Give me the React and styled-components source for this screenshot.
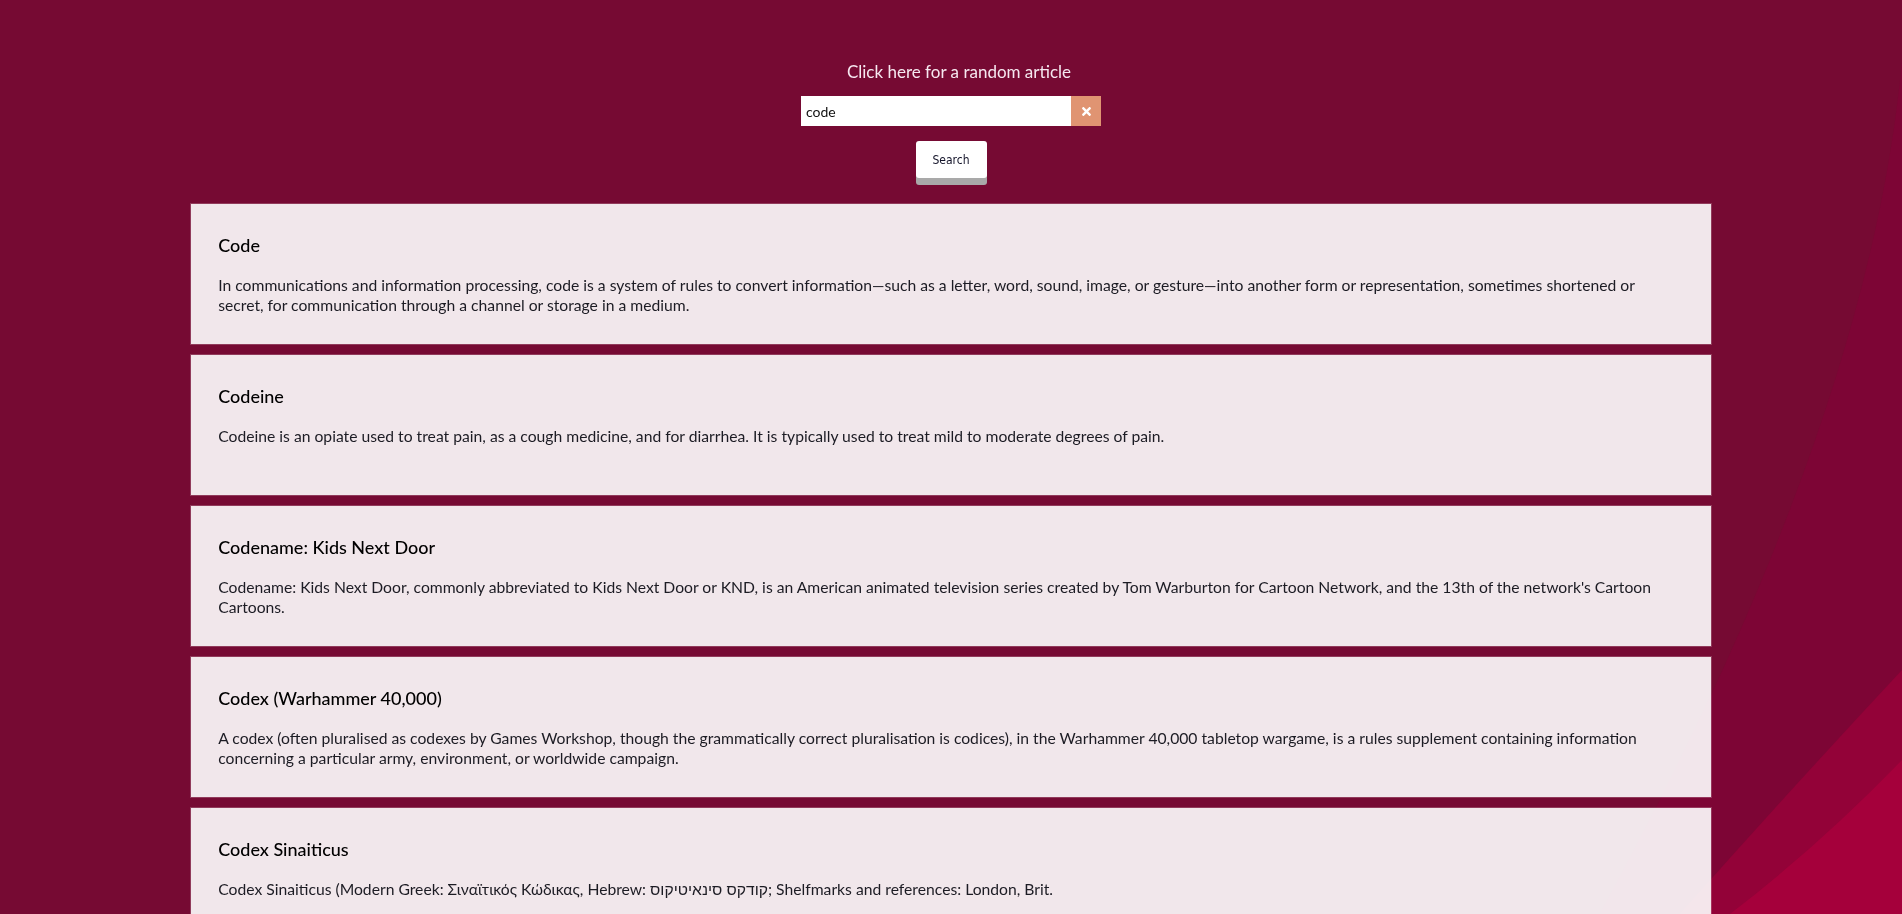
import React, { useState } from "react";
import styled, { createGlobalStyle } from "styled-components";
import { FaTimes } from "react-icons/fa";

const results = [
  {
    title: "Code",
    snippet:
      "In communications and information processing, code is a system of rules to convert information—such as a letter, word, sound, image, or gesture—into another form or representation, sometimes shortened or secret, for communication through a channel or storage in a medium.",
  },
  {
    title: "Codeine",
    snippet:
      "Codeine is an opiate used to treat pain, as a cough medicine, and for diarrhea. It is typically used to treat mild to moderate degrees of pain.",
  },
  {
    title: "Codename: Kids Next Door",
    snippet:
      "Codename: Kids Next Door, commonly abbreviated to Kids Next Door or KND, is an American animated television series created by Tom Warburton for Cartoon Network, and the 13th of the network's Cartoon Cartoons.",
  },
  {
    title: "Codex (Warhammer 40,000)",
    snippet:
      "A codex (often pluralised as codexes by Games Workshop, though the grammatically correct pluralisation is codices), in the Warhammer 40,000 tabletop wargame, is a rules supplement containing information concerning a particular army, environment, or worldwide campaign.",
  },
  {
    title: "Codex Sinaiticus",
    snippet:
      "Codex Sinaiticus (Modern Greek: Σιναϊτικός Κώδικας, Hebrew: קודקס סינאיטיקוס; Shelfmarks and references: London, Brit.",
  },
  {
    title: "Code Geass",
    snippet:
      "Code Geass: Lelouch of the Rebellion is a Japanese anime television series produced by Sunrise.",
  },
  {
    title: "Code of Hammurabi",
    snippet:
      "The Code of Hammurabi is a well-preserved Babylonian code of law of ancient Mesopotamia, dated back to about 1754 BC.",
  },
];

const GlobalStyle = createGlobalStyle`
  * { box-sizing: border-box; }
  body {
    margin: 0;
    background: #760a33;
    font-family: Lato, "Noto Sans", sans-serif;
  }
`;

// decorative waves behind the page
const Backdrop = styled.svg`
  position: fixed;
  inset: 0;
  width: 100%;
  height: 100%;
  z-index: 0;
`;

const Page = styled.div`
  position: relative;
  z-index: 1;
  padding-top: 61px;
  padding-bottom: 40px;
`;

const Header = styled.header`
  display: flex;
  flex-direction: column;
  align-items: center;
`;

const RandomLink = styled.a`
  padding-left: 16px;
  color: #f6e8f0;
  font-size: 17px;
  line-height: 21px;
  text-decoration: none;
  cursor: pointer;
`;

const SearchRow = styled.div`
  display: flex;
  margin-top: 14px;
  height: 30px;
`;

const SearchInput = styled.input`
  width: 270px;
  height: 30px;
  border: none;
  outline: none;
  padding: 0 5px;
  font-family: Lato, "Noto Sans", sans-serif;
  font-size: 14px;
  color: #111;
  background: #fff;
`;

const ClearButton = styled.button`
  width: 30px;
  height: 30px;
  border: none;
  padding: 0;
  display: flex;
  align-items: center;
  justify-content: center;
  background: #e09472;
  color: #fff;
  cursor: pointer;

  svg {
    font-size: 13px;
  }
`;

const SearchButton = styled.button`
  margin-top: 15px;
  width: 71px;
  height: 37px;
  border: none;
  border-radius: 3px;
  background: #fff;
  box-shadow: 0 7px 0 #a9a9a9;
  font-family: "Liberation Sans Narrow", "DejaVu Sans Condensed", sans-serif;
  font-size: 12px;
  color: #14142a;
  cursor: pointer;
`;

const Results = styled.main`
  width: 80%;
  margin: 25px auto 0;
  display: flex;
  flex-direction: column;
  gap: 9px;
`;

const Card = styled.article`
  min-height: 142px;
  padding: 20px 27px;
  border: 1px solid rgba(255, 255, 255, 0.2);
  background: rgba(255, 255, 255, 0.9);
  background-clip: padding-box;
`;

const Title = styled.h3`
  margin: 10px 0 0;
  font-size: 18px;
  line-height: 22px;
  font-weight: 500;
  color: #000;
`;

const Snippet = styled.p`
  margin: 19px 0 0;
  font-size: 15.7px;
  line-height: 20px;
  color: #1c1c24;
`;

const App = () => {
  const [query, setQuery] = useState("code");

  return (
    <>
      <GlobalStyle />
      <Backdrop viewBox="0 0 1902 914" preserveAspectRatio="none">
        <rect width="1902" height="914" fill="#760a33" />
        <path d="M1902,60 Q1870,420 1600,914 L1902,914 Z" fill="#7d0535" />
        <path d="M1902,670 Q1790,790 1680,914 L1902,914 Z" fill="#930238" />
        <path d="M1902,760 Q1820,845 1730,914 L1902,914 Z" fill="#a5003b" />
      </Backdrop>
      <Page>
        <Header>
          <RandomLink>Click here for a random article</RandomLink>
          <SearchRow>
            <SearchInput
              value={query}
              onChange={(e) => setQuery(e.target.value)}
            />
            <ClearButton onClick={() => setQuery("")}>
              <FaTimes />
            </ClearButton>
          </SearchRow>
          <SearchButton>Search</SearchButton>
        </Header>
        <Results>
          {results.map((r) => (
            <Card key={r.title}>
              <Title>{r.title}</Title>
              <Snippet>{r.snippet}</Snippet>
            </Card>
          ))}
        </Results>
      </Page>
    </>
  );
};

export default App;
